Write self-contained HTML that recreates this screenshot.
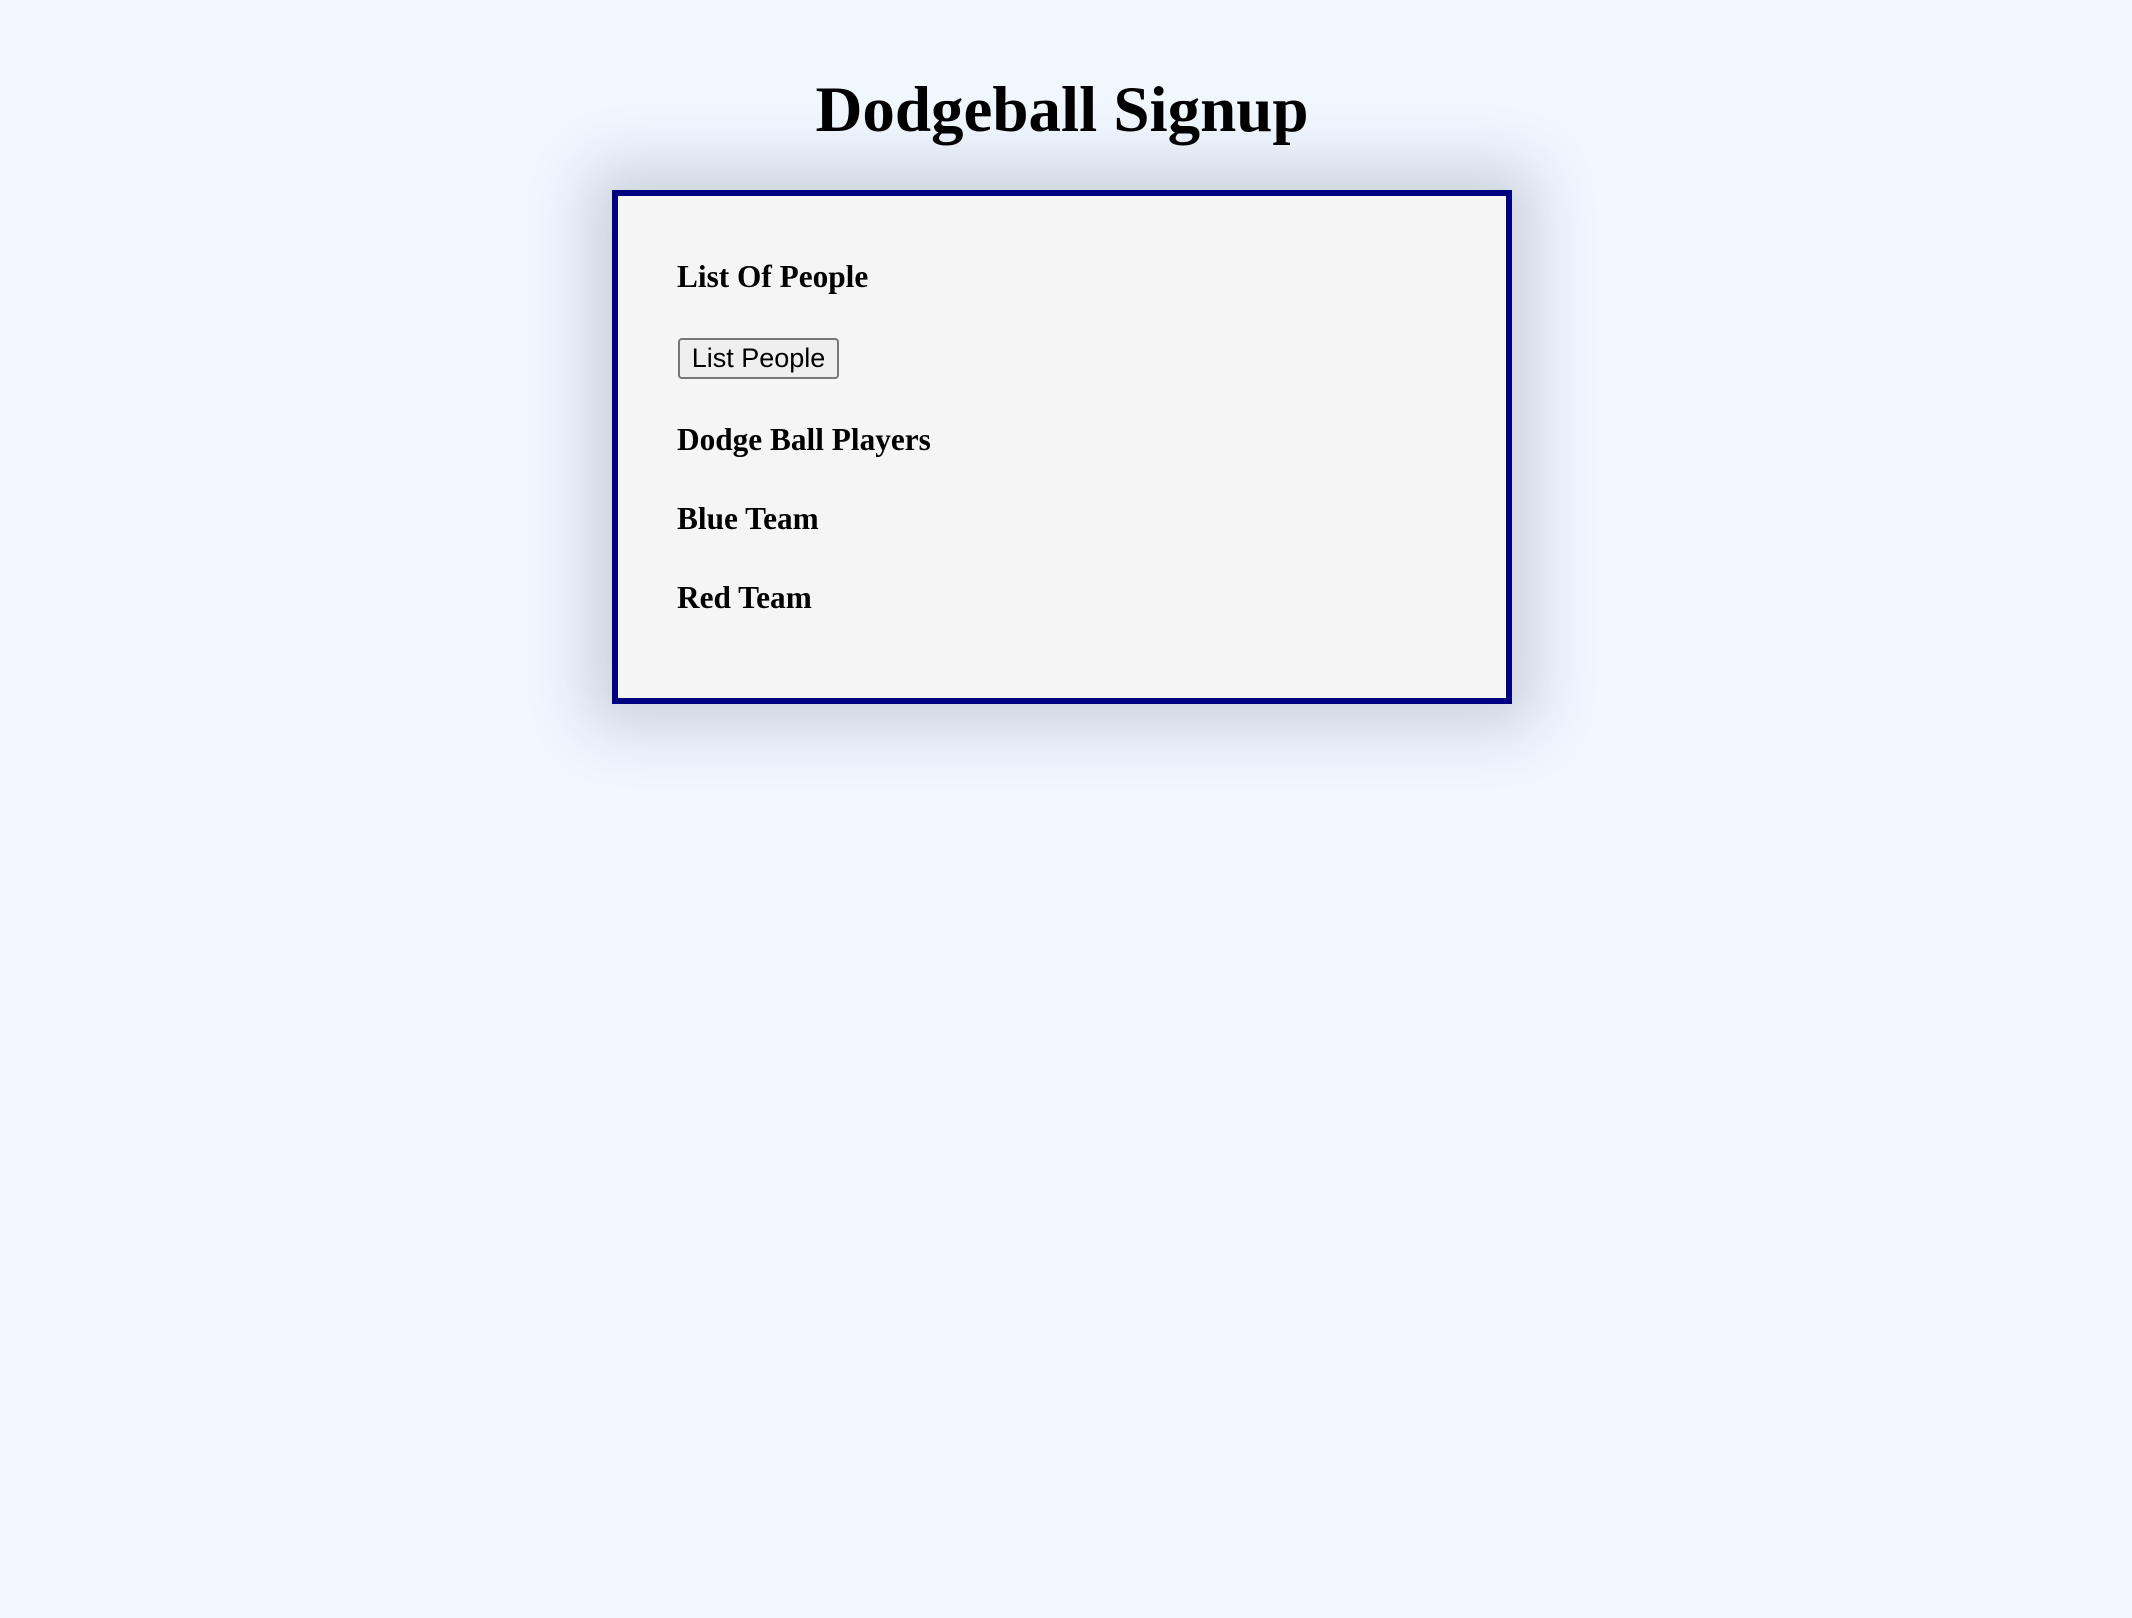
<!DOCTYPE html>
<html><head><meta charset="utf-8"><style>
html,body{margin:0;padding:0;width:2132px;height:1618px;background:#f0f7ff;overflow:hidden;font-family:"Liberation Serif",serif;}
.t{position:absolute;margin:0;white-space:nowrap;line-height:1;font-weight:bold;color:#000;}
h1.t{font-size:65px;left:0;width:2124px;text-align:center;top:78px;}
.box{position:absolute;left:612px;top:190px;width:888px;height:502px;border:6px solid #000080;background:#f5f5f5;box-shadow:0 0 60px 22px rgba(30,35,55,0.18);}
h3.t{font-size:31.3px;left:677px;}
button{position:absolute;left:678px;top:338px;width:161px;height:41px;box-sizing:border-box;border:2px solid #777;border-radius:4px;background:#efefef;font-family:"Liberation Sans",sans-serif;font-size:27px;padding:0;color:#000;line-height:37px;}
</style></head><body>
<h1 class="t">Dodgeball Signup</h1>
<div class="box"></div>
<h3 class="t" style="top:261px">List Of People</h3>
<button>List People</button>
<h3 class="t" style="top:424px">Dodge Ball Players</h3>
<h3 class="t" style="top:503px">Blue Team</h3>
<h3 class="t" style="top:582px">Red Team</h3>
</body></html>
